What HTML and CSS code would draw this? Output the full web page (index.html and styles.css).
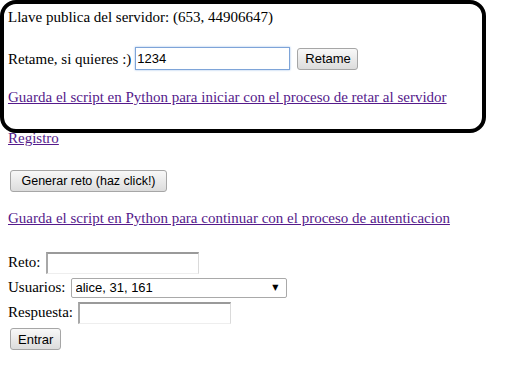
FILE: index.html
```html
<!DOCTYPE html>
<html lang="es">
<head>
    <meta charset="UTF-8">
    <meta name="viewport" content="width=device-width, initial-scale=1.0">
    <title>Reto al servidor</title>
    <link rel="stylesheet" href="styles.css">
</head>
<body>
    <div class="reto-box">
        <p class="row">Llave publica del servidor: (653, 44906647)</p>
        <p class="row row-input">Retame, si quieres :) <input type="text" class="field field-focus" value="1234"> <button class="btn btn-retame">Retame</button></p>
        <p class="row row-link"><a href="#">Guarda el script en Python para iniciar con el proceso de retar al servidor</a></p>
    </div>

    <div class="page">
        <a href="#" class="registro">Registro</a>

        <p class="generar"><button class="btn btn-generar">Generar reto (haz click!)</button></p>

        <p class="script-link"><a href="#">Guarda el script en Python para continuar con el proceso de autenticacion</a></p>

        <form class="login">
            <div class="form-row">Reto: <input type="text" class="field"></div>
            <div class="form-row">Usuarios: <span class="select-wrap"><select class="select">
                <option>alice, 31, 161</option>
                <option>bob, 17, 203</option>
            </select></span></div>
            <div class="form-row">Respuesta: <input type="text" class="field"></div>
            <div class="form-row form-submit"><button type="button" class="btn btn-entrar">Entrar</button></div>
        </form>
    </div>
</body>
</html>
```

FILE: styles.css
```css
body {
    font-family: "Liberation Serif", "Times New Roman", serif;
    font-size: 15px;
    color: #000;
    margin: 0;
    padding: 0;
    background: #fff;
}

a {
    color: #551a8b;
}

p {
    margin: 0;
}

.reto-box {
    box-sizing: border-box;
    width: 486px;
    height: 133px;
    margin: 0 0 -4px 0;
    padding: 4px 4px 0;
    border: 4px solid #000;
    border-radius: 16px;
}

.page {
    padding: 0 8px;
}

.row {
    line-height: 18px;
}

.row-input {
    display: flex;
    align-items: center;
    gap: 4px;
    height: 23px;
    margin-top: 21px;
}

.row-link {
    margin-top: 18px;
}

.field {
    box-sizing: border-box;
    width: 153px;
    height: 22px;
    padding: 1px 2px;
    font-family: "Liberation Sans", Arial, sans-serif;
    font-size: 13px;
    color: #000;
    background: #fff;
    border-width: 2px 1px 1px 2px;
    border-style: solid;
    border-color: #9a9a9a #dadada #eeeeee #a8a8a8;
    outline: none;
}

.field-focus {
    height: 23px;
    width: 155px;
    padding: 1px 1px;
    border: 1px solid #7ea4d8;
    box-shadow: 0 0 2px #9bbde8;
}

.btn {
    box-sizing: border-box;
    height: 22px;
    padding: 0 7px;
    font-family: "Liberation Sans", Arial, sans-serif;
    font-size: 12.5px;
    white-space: nowrap;
    color: #000;
    background: linear-gradient(#f8f8f8, #dcdcdc);
    border: 1px solid #a6a6a6;
    border-radius: 3px;
}

.btn-retame {
    margin-left: 3px;
    width: 61px;
    font-size: 13px;
}

.registro {
    display: block;
    width: max-content;
    line-height: 18px;
    position: relative;
}

.generar {
    display: flex;
    margin-top: 23px;
    padding-left: 2px;
}

.btn-generar {
    width: 157px;
}

.script-link {
    margin-top: 17px;
    line-height: 18px;
}

.login {
    margin-top: 23px;
}

.form-row {
    display: flex;
    align-items: center;
    gap: 5px;
    height: 25px;
}

.form-submit {
    padding-left: 2px;
    align-items: flex-end;
}

.btn-entrar {
    width: 51px;
    font-size: 13px;
}

.select-wrap {
    position: relative;
    display: inline-block;
}

.select-wrap::after {
    content: "\25BC";
    position: absolute;
    right: 8px;
    top: 5px;
    font-family: "DejaVu Sans", sans-serif;
    font-size: 8px;
    color: #000;
    pointer-events: none;
}

.select {
    box-sizing: border-box;
    width: 216px;
    height: 20px;
    padding: 0 4px;
    font-family: "Liberation Sans", Arial, sans-serif;
    font-size: 13px;
    color: #000;
    background: #fff;
    border: 1px solid #a9a9a9;
    border-radius: 2px;
    appearance: none;
    -webkit-appearance: none;
}
```
